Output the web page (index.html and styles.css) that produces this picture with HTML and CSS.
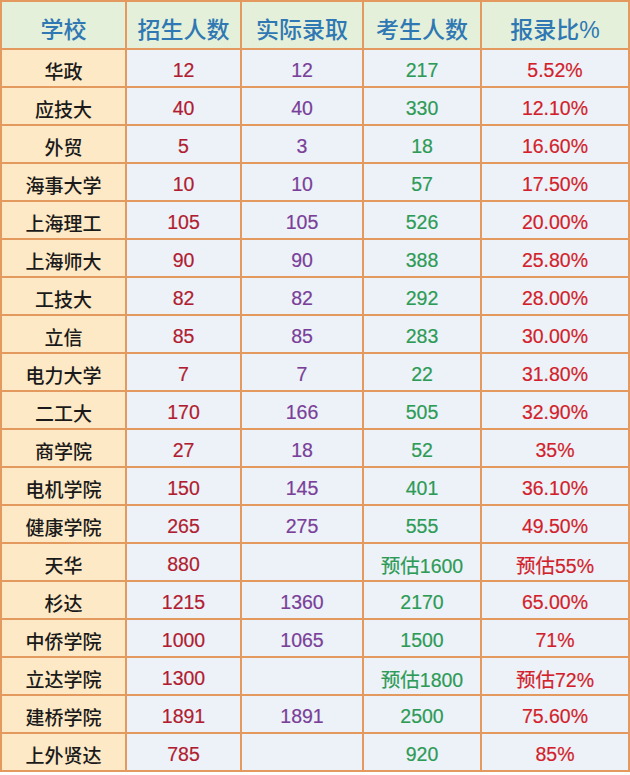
FILE: index.html
```html
<!DOCTYPE html>
<html lang="zh">
<head>
<meta charset="utf-8">
<link rel="stylesheet" href="styles.css">
</head>
<body>
<div class="table">
  <div class="th">学校</div><div class="th">招生人数</div><div class="th">实际录取</div><div class="th">考生人数</div><div class="th">报录比%</div>

  <div class="name">华政</div><div class="c a">12</div><div class="c b">12</div><div class="c g">217</div><div class="c r">5.52%</div>
  <div class="name">应技大</div><div class="c a">40</div><div class="c b">40</div><div class="c g">330</div><div class="c r">12.10%</div>
  <div class="name">外贸</div><div class="c a">5</div><div class="c b">3</div><div class="c g">18</div><div class="c r">16.60%</div>
  <div class="name">海事大学</div><div class="c a">10</div><div class="c b">10</div><div class="c g">57</div><div class="c r">17.50%</div>
  <div class="name">上海理工</div><div class="c a">105</div><div class="c b">105</div><div class="c g">526</div><div class="c r">20.00%</div>
  <div class="name">上海师大</div><div class="c a">90</div><div class="c b">90</div><div class="c g">388</div><div class="c r">25.80%</div>
  <div class="name">工技大</div><div class="c a">82</div><div class="c b">82</div><div class="c g">292</div><div class="c r">28.00%</div>
  <div class="name">立信</div><div class="c a">85</div><div class="c b">85</div><div class="c g">283</div><div class="c r">30.00%</div>
  <div class="name">电力大学</div><div class="c a">7</div><div class="c b">7</div><div class="c g">22</div><div class="c r">31.80%</div>
  <div class="name">二工大</div><div class="c a">170</div><div class="c b">166</div><div class="c g">505</div><div class="c r">32.90%</div>
  <div class="name">商学院</div><div class="c a">27</div><div class="c b">18</div><div class="c g">52</div><div class="c r">35%</div>
  <div class="name">电机学院</div><div class="c a">150</div><div class="c b">145</div><div class="c g">401</div><div class="c r">36.10%</div>
  <div class="name">健康学院</div><div class="c a">265</div><div class="c b">275</div><div class="c g">555</div><div class="c r">49.50%</div>
  <div class="name">天华</div><div class="c a">880</div><div class="c b"></div><div class="c g">预估1600</div><div class="c r">预估55%</div>
  <div class="name">杉达</div><div class="c a">1215</div><div class="c b">1360</div><div class="c g">2170</div><div class="c r">65.00%</div>
  <div class="name">中侨学院</div><div class="c a">1000</div><div class="c b">1065</div><div class="c g">1500</div><div class="c r">71%</div>
  <div class="name">立达学院</div><div class="c a">1300</div><div class="c b"></div><div class="c g">预估1800</div><div class="c r">预估72%</div>
  <div class="name">建桥学院</div><div class="c a">1891</div><div class="c b">1891</div><div class="c g">2500</div><div class="c r">75.60%</div>
  <div class="name">上外贤达</div><div class="c a">785</div><div class="c b"></div><div class="c g">920</div><div class="c r">85%</div>
</div>
</body>
</html>
```

FILE: styles.css
```css
html, body {
  margin: 0;
  padding: 0;
  background: #ffffff;
}
body {
  font-family: "Liberation Sans", "Noto Sans CJK SC", sans-serif;
}
.table {
  display: grid;
  grid-template-columns: 123px 113px 120px 116px 146px;
  grid-template-rows: 46px;
  grid-auto-rows: 36px;
  gap: 2px;
  padding: 2px;
  background: #e49a5e;
  width: max-content;
}
.table > div {
  display: flex;
  align-items: center;
  justify-content: center;
  white-space: nowrap;
  box-sizing: border-box;
}
.th {
  background: #e4f0da;
  color: #2f78b3;
  font-size: 23px;
  font-weight: 500;
  padding-top: 5px;
}
.name {
  background: #fde9c6;
  color: #1a1a1a;
  font-size: 19px;
  font-weight: 500;
  padding-top: 5px;
}
.c {
  background: #edf2f9;
  font-size: 19.5px;
  padding-top: 5px;
  -webkit-text-stroke: 0.2px currentColor;
}
.a { color: #b11d30; }
.b { color: #7a3f98; }
.g { color: #2d9b56; }
.r { color: #d21f2b; }
```
